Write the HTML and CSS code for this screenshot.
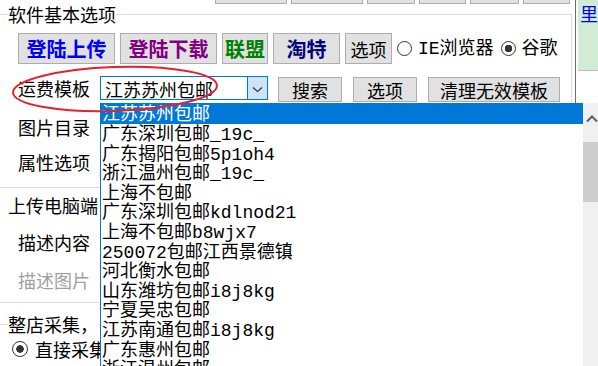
FILE: index.html
```html
<!DOCTYPE html>
<html lang="zh-CN">
<head>
  <meta charset="UTF-8" />
  <title>软件基本选项</title>
  <link rel="stylesheet" href="styles.css">
</head>
<body>
  <div class="window">
    <div class="main">
      <!-- bottoms of the buttons above, scrolled out of view -->
      <div class="topbar">
        <span class="stub w72"></span>
        <span class="stub w72"></span>
        <span class="stub w48"></span>
        <span class="stub w47"></span>
        <span class="stub w49"></span>
        <span class="stub w47"></span>
      </div>

      <fieldset class="group">
        <legend>软件基本选项</legend>

        <div class="row row-login">
          <button class="btn big blue w97">登陆上传</button>
          <button class="btn big purple w97">登陆下载</button>
          <button class="btn big green w46">联盟</button>
          <button class="btn big navy w67">淘特</button>
          <button class="btn w47">选项</button>
          <label class="radio"><span class="dot"></span><span class="radio-text">IE浏览器</span></label>
          <label class="radio"><span class="dot checked"></span><span class="radio-text">谷歌</span></label>
        </div>

        <div class="row row-freight">
          <span class="label">运费模板</span>
          <div class="combo">
            <span class="combo-text">江苏苏州包邮</span>
            <span class="combo-arrow">
              <svg width="19" height="22" viewBox="0 0 19 22"><path d="M5 10.5 L9.5 14.5 L14 10.5" fill="none" stroke="#3c3c3c" stroke-width="1.3"/></svg>
            </span>
          </div>
          <button class="btn small w64">搜索</button>
          <button class="btn small w64">选项</button>
          <button class="btn small w132">清理无效模板</button>
        </div>

        <div class="row row-pics"><span class="label">图片目录</span></div>
        <div class="row row-attr"><span class="label">属性选项</span></div>
      </fieldset>

      <div class="panel">
        <div class="panel-title">上传电脑端</div>
        <div class="row row-desc"><span class="label">描述内容</span></div>
        <div class="row row-descimg"><span class="label disabled">描述图片</span></div>
      </div>

      <fieldset class="group shop">
        <legend>整店采集，</legend>
        <label class="radio shop-radio"><span class="dot checked"></span>直接采集</label>
      </fieldset>
    </div>

    <div class="side">
      <div class="side-top">里</div>
    </div>
  </div>

  <!-- open combo list -->
  <div class="dropdown">
    <div class="items">
      <div class="item selected">江苏苏州包邮</div>
      <div class="item">广东深圳包邮_19c_</div>
      <div class="item">广东揭阳包邮5p1oh4</div>
      <div class="item">浙江温州包邮_19c_</div>
      <div class="item">上海不包邮</div>
      <div class="item">广东深圳包邮kdlnod21</div>
      <div class="item">上海不包邮b8wjx7</div>
      <div class="item">250072包邮江西景德镇</div>
      <div class="item">河北衡水包邮</div>
      <div class="item">山东潍坊包邮i8j8kg</div>
      <div class="item">宁夏吴忠包邮</div>
      <div class="item">江苏南通包邮i8j8kg</div>
      <div class="item">广东惠州包邮</div>
      <div class="item">浙江温州包邮</div>
    </div>
    <div class="scrollbar">
      <div class="sb-up">
        <svg width="17" height="17" viewBox="0 0 17 17"><path d="M4 14.5 L9 9.5 L14 14.5" fill="none" stroke="#606060" stroke-width="2"/></svg>
      </div>
      <div class="sb-thumb"></div>
    </div>
  </div>

  <!-- red marker drawn over the screenshot -->
  <svg class="marker" width="598" height="366" viewBox="0 0 598 366">
    <ellipse cx="115" cy="89" rx="102" ry="22" transform="rotate(-2 115 89)" fill="none" stroke="#e8202a" stroke-width="2"/>
  </svg>
</body>
</html>
```

FILE: styles.css
```css
body {
  margin: 0;
  width: 598px;
  height: 366px;
  overflow: hidden;
  position: relative;
  background: #fff;
  color: #000;
  font-family: "Noto Sans CJK SC", sans-serif;
  font-size: 18px;
}

.window {
  display: flex;
  height: 366px;
}

.main {
  width: 583px;
}

/* scrolled-off buttons */
.topbar {
  display: flex;
  gap: 4px;
  height: 4px;
  padding-left: 215px;
}

.stub {
  height: 4px;
  box-sizing: border-box;
  background: #e1e1e1;
  border: 1px solid #adadad;
  border-top: none;
}

.w72 { width: 72px; }
.w48 { width: 48px; }
.w47 { width: 47px; }
.w49 { width: 49px; }

/* group boxes */
.group {
  margin: 0;
  padding: 0 0 7px 8px;
  width: 572px;
  min-width: 0;
  box-sizing: border-box;
  border: 1px solid #dcdcdc;
  border-left: none;
}

.group legend {
  padding: 0;
  line-height: 20px;
}

.row {
  display: flex;
  align-items: center;
  margin-left: 10px;
}

.label {
  width: 72px;
  line-height: 24px;
}

.label.disabled {
  color: #a0a0a0;
}

.row-login {
  margin-top: 9px;
  height: 31px;
  gap: 5px;
}

.row-freight {
  margin-top: 12px;
  height: 26px;
  align-items: flex-start;
}

.row-freight .label {
  margin-top: 0;
}

.row-pics {
  margin-top: 8px;
  height: 34px;
}

.row-attr {
  height: 36px;
}

/* buttons */
.btn {
  display: flex;
  align-items: center;
  justify-content: center;
  height: 31px;
  padding: 0;
  box-sizing: border-box;
  background: #e1e1e1;
  border: 1px solid #adadad;
  border-radius: 0;
  font-family: inherit;
  font-size: 18px;
  line-height: 1;
  color: #000;
}

.btn.big {
  font-size: 20px;
  font-weight: 700;
}

.btn.small {
  height: 25px;
  margin-top: 1px;
  margin-left: 11px;
}

.blue { color: #0000ff; }
.purple { color: #800080; }
.green { color: #008000; }
.navy { color: #000080; }

.w97 { width: 97px; }
.w46 { width: 46px; }
.w67 { width: 67px; }
.w64 { width: 64px; }
.w132 { width: 132px; }

.row-freight .btn.small:first-of-type {
  margin-left: 10px;
}

/* radio buttons */
.radio {
  display: flex;
  align-items: center;
  margin-left: 0;
}

.radio + .radio {
  margin-left: 2px;
}

.dot {
  width: 15px;
  height: 15px;
  margin-right: 6px;
  box-sizing: border-box;
  border: 1px solid #333;
  border-radius: 50%;
  background: #fff;
}

.dot.checked {
  background: radial-gradient(circle, #333 0 3.5px, #fff 4px);
}

.radio-text {
  font-family: "Liberation Mono", "Noto Sans CJK SC", monospace;
  line-height: 24px;
}

/* combo box */
.combo {
  display: flex;
  width: 168px;
  height: 24px;
  margin-left: 10px;
  box-sizing: border-box;
  border: 1px solid #0078d7;
  background: #fff;
}

.combo-text {
  flex: 1;
  padding-left: 4px;
  line-height: 24px;
}

.combo-arrow {
  width: 20px;
  box-sizing: border-box;
  border-left: 1px solid #0078d7;
  background: #cce4f7;
}

/* second panel */
.panel {
  width: 572px;
  padding: 0 0 4px 8px;
  box-sizing: border-box;
  border-bottom: 1px solid #dcdcdc;
}

.panel-title {
  margin-top: 5px;
  line-height: 24px;
}

.row-desc {
  margin-top: 5px;
  height: 40px;
}

.row-descimg {
  height: 36px;
}

.shop {
  margin-top: 11px;
}

.shop-radio {
  height: 30px;
  margin-left: 4px;
}

.shop-radio .dot {
  width: 16px;
  height: 16px;
  margin-right: 7px;
}

/* right-hand strip */
.side {
  flex: 1;
  padding-left: 2px;
  border-left: 1px solid #6d6d6d;
}

.side-top {
  height: 70px;
  overflow: hidden;
  padding-left: 2px;
  background: #d1ebd5;
  border-bottom: 1px solid #b9b9b9;
  color: #0000ff;
  line-height: 26px;
  white-space: nowrap;
}

/* dropped-down list */
.dropdown {
  position: absolute;
  left: 100px;
  top: 103px;
  width: 500px;
  height: 263px;
  display: flex;
  box-sizing: border-box;
  border-left: 1px solid #0078d7;
  background: #fff;
}

.items {
  flex: 1;
  overflow: hidden;
  font-family: "Liberation Mono", "Noto Sans CJK SC", monospace;
  font-size: 18px;
}

.item {
  height: 19.6px;
  line-height: 23.6px;
  padding-left: 1px;
  white-space: nowrap;
}

.item.selected {
  height: 21px;
  line-height: 25px;
  background: #0078d7;
  color: #fff;
}

.scrollbar {
  width: 17px;
  display: flex;
  flex-direction: column;
  background: #f0f0f0;
}

.sb-up {
  height: 17px;
}

.sb-thumb {
  height: 60px;
  margin-top: 22px;
  background: #cdcdcd;
}

.marker {
  position: absolute;
  left: 0;
  top: 0;
  pointer-events: none;
}
```
